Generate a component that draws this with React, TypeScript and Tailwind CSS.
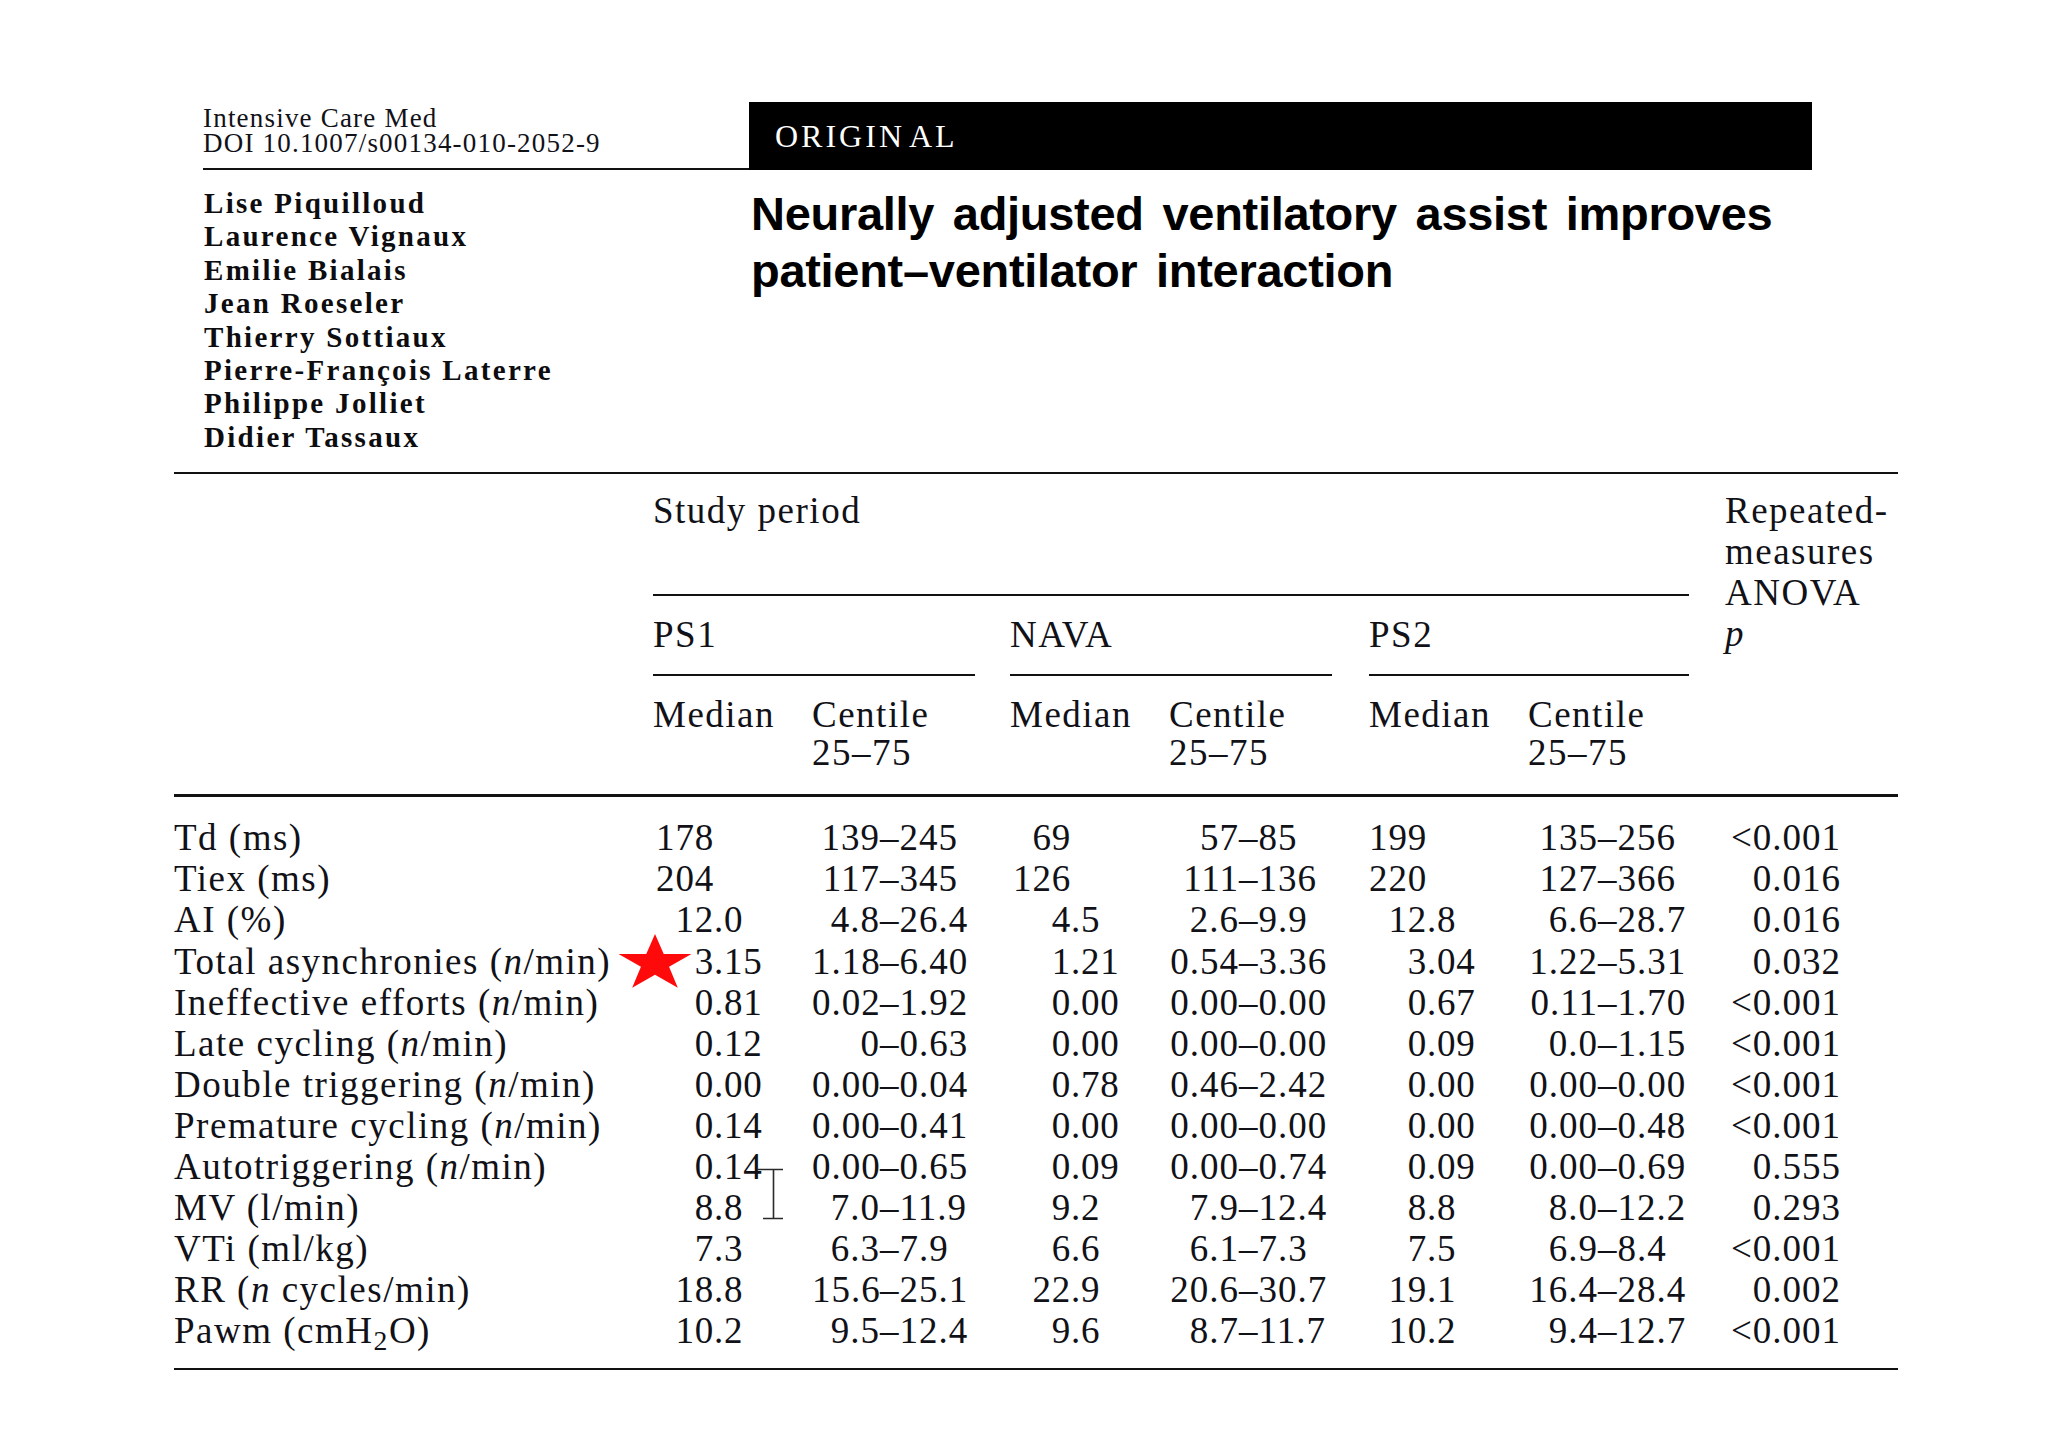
import React from "react";

type Row = { label: React.ReactNode; v: string[]; p: string };

const N = () => <i>n</i>;

const rows: Row[] = [
  { label: <>Td (ms)</>, v: ["178", "139–245", "69", "57–85", "199", "135–256"], p: "<0.001" },
  { label: <>Tiex (ms)</>, v: ["204", "117–345", "126", "111–136", "220", "127–366"], p: "0.016" },
  { label: <>AI (%)</>, v: ["12.0", "4.8–26.4", "4.5", "2.6–9.9", "12.8", "6.6–28.7"], p: "0.016" },
  { label: <>Total asynchronies (<N />/min)</>, v: ["3.15", "1.18–6.40", "1.21", "0.54–3.36", "3.04", "1.22–5.31"], p: "0.032" },
  { label: <>Ineffective efforts (<N />/min)</>, v: ["0.81", "0.02–1.92", "0.00", "0.00–0.00", "0.67", "0.11–1.70"], p: "<0.001" },
  { label: <>Late cycling (<N />/min)</>, v: ["0.12", "0–0.63", "0.00", "0.00–0.00", "0.09", "0.0–1.15"], p: "<0.001" },
  { label: <>Double triggering (<N />/min)</>, v: ["0.00", "0.00–0.04", "0.78", "0.46–2.42", "0.00", "0.00–0.00"], p: "<0.001" },
  { label: <>Premature cycling (<N />/min)</>, v: ["0.14", "0.00–0.41", "0.00", "0.00–0.00", "0.00", "0.00–0.48"], p: "<0.001" },
  { label: <>Autotriggering (<N />/min)</>, v: ["0.14", "0.00–0.65", "0.09", "0.00–0.74", "0.09", "0.00–0.69"], p: "0.555" },
  { label: <>MV (l/min)</>, v: ["8.8", "7.0–11.9", "9.2", "7.9–12.4", "8.8", "8.0–12.2"], p: "0.293" },
  { label: <>VTi (ml/kg)</>, v: ["7.3", "6.3–7.9", "6.6", "6.1–7.3", "7.5", "6.9–8.4"], p: "<0.001" },
  { label: <>RR (<N /> cycles/min)</>, v: ["18.8", "15.6–25.1", "22.9", "20.6–30.7", "19.1", "16.4–28.4"], p: "0.002" },
  { label: <>Pawm (cmH<sub>2</sub>O)</>, v: ["10.2", "9.5–12.4", "9.6", "8.7–11.7", "10.2", "9.4–12.7"], p: "<0.001" },
];

const medW = ["w-[61px]", "w-[61px]", "w-[58px]"];
const cenW = ["w-[68px]", "w-[70px]", "w-[70px]"];

function Median({ value, g }: { value: string; g: number }) {
  const i = value.indexOf(".");
  const a = i >= 0 ? value.slice(0, i) : value;
  const b = i >= 0 ? value.slice(i) : "";
  return (
    <div className="flex tracking-[0.8px]">
      <span className={`${medW[g]} text-right`}>{a}</span>
      <span>{b}</span>
    </div>
  );
}

function Centile({ value, g }: { value: string; g: number }) {
  const [a, b] = value.split("–");
  return (
    <div className="flex tracking-[1px]">
      <span className={`${cenW[g]} text-right`}>{a}</span>
      <span>–</span>
      <span>{b}</span>
    </div>
  );
}

const groups = [
  { name: "PS1", w: "w-[357px]", rule: "w-[322px]", med: "w-[159px]" },
  { name: "NAVA", w: "w-[359px]", rule: "w-[322px]", med: "w-[159px]" },
  { name: "PS2", w: "w-[356px]", rule: "w-[320px]", med: "w-[159px]" },
];

export default function App() {
  return (
    <div className="relative w-[2048px] h-[1447px] overflow-hidden bg-white text-[#111118] font-['Liberation_Serif','Times_New_Roman',serif]">
      <div className="pt-[102px]">
        {/* header strip */}
        <div className="flex items-end pl-[203px]">
          <div className="w-[546px] border-b-2 border-[#111] pb-[12px] text-[27px] leading-[25px] tracking-[1.2px]">
            <div>Intensive Care Med</div>
            <div>DOI 10.1007/s00134-010-2052-9</div>
          </div>
          <div className="flex h-[68px] w-[1063px] items-center bg-black pl-[26px] text-[32px] leading-[32px] tracking-[3px] text-white">
            ORIGIN<span className="ml-[4px]">AL</span>
          </div>
        </div>

        {/* authors + title */}
        <div className="mt-[17px] flex pl-[204px]">
          <div className="w-[547px] text-[29px] font-bold leading-[33.4px] tracking-[2.3px] text-[#0d0d10]">
            <div>Lise Piquilloud</div>
            <div>Laurence Vignaux</div>
            <div>Emilie Bialais</div>
            <div>Jean Roeseler</div>
            <div>Thierry Sottiaux</div>
            <div>Pierre-François Laterre</div>
            <div>Philippe Jolliet</div>
            <div>Didier Tassaux</div>
          </div>
          <div className="-mt-[2px] font-['Liberation_Sans',Arial,sans-serif] text-[47px] font-bold leading-[57px] tracking-[-0.3px] [word-spacing:6px] text-black">
            <div>Neurally adjusted ventilatory assist improves</div>
            <div>patient–ventilator interaction</div>
          </div>
        </div>

        {/* table */}
        <div className="ml-[174px] mt-[18px] w-[1724px] border-t-2 border-[#111] text-[37px] tracking-[1.5px]">
          <div className="flex border-b-[3px] border-[#111]">
            <div className="w-[479px]" />
            <div className="w-[1072px] pb-[22px]">
              <div className="w-[1036px] border-b-2 border-[#111] pt-[16px] pb-[63px] leading-[41px]">Study period</div>
              <div className="flex">
                {groups.map((g) => (
                  <div key={g.name} className={g.w}>
                    <div className={`${g.rule} border-b-2 border-[#111] pt-[18px] pb-[19px] leading-[41px]`}>{g.name}</div>
                    <div className="flex pt-[20px] leading-[38px]">
                      <div className={g.med}>Median</div>
                      <div>
                        Centile
                        <br />
                        25–75
                      </div>
                    </div>
                  </div>
                ))}
              </div>
            </div>
            <div className="w-[173px] pt-[16px] leading-[41px]">
              <div>Repeated-</div>
              <div>measures</div>
              <div>ANOVA</div>
              <div>
                <i>p</i>
              </div>
            </div>
          </div>

          <div className="border-b-2 border-[#111] pt-[20px] pb-[17px]">
            {rows.map((r, idx) => (
              <div
                key={idx}
                className="grid h-[41.1px] grid-cols-[479px_159px_198px_159px_200px_159px_197px_173px] leading-[41px] whitespace-nowrap"
              >
                <div>{r.label}</div>
                <Median value={r.v[0]} g={0} />
                <Centile value={r.v[1]} g={0} />
                <Median value={r.v[2]} g={1} />
                <Centile value={r.v[3]} g={1} />
                <Median value={r.v[4]} g={2} />
                <Centile value={r.v[5]} g={2} />
                <div className="pr-[57px] text-right tracking-[1px]">{r.p}</div>
              </div>
            ))}
          </div>
        </div>
      </div>

      {/* red star annotation */}
      <svg className="absolute left-[617px] top-[934px]" width="76" height="56" viewBox="0 0 100 95" preserveAspectRatio="none">
        <polygon points="50,0 61.5,34 98,34 68.5,55.5 80,91 50,69 20,91 31.5,55.5 2,34 38.5,34" fill="#ff0a0a" />
      </svg>

      {/* text cursor (I-beam) */}
      <svg className="absolute left-[755px] top-[1166px]" width="30" height="56" viewBox="0 0 30 56">
        <path d="M2 3.5 H28 M18.5 3.5 V52.5 M8 52.5 H28" stroke="#2a2a2a" strokeWidth="1.6" fill="none" />
      </svg>
    </div>
  );
}
